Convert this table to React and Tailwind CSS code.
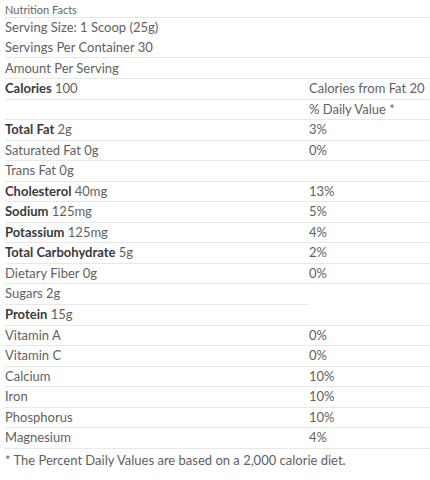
const rows = [
  { label: "Calories", value: "100", bold: true, right: "Calories from Fat 20" },
  { label: "", value: "", right: "% Daily Value *" },
  { label: "Total Fat", value: "2g", bold: true, right: "3%" },
  { label: "Saturated Fat", value: "0g", right: "0%" },
  { label: "Trans Fat", value: "0g", right: "" },
  { label: "Cholesterol", value: "40mg", bold: true, right: "13%" },
  { label: "Sodium", value: "125mg", bold: true, right: "5%" },
  { label: "Potassium", value: "125mg", bold: true, right: "4%" },
  { label: "Total Carbohydrate", value: "5g", bold: true, right: "2%" },
  { label: "Dietary Fiber", value: "0g", right: "0%" },
  { label: "Sugars", value: "2g", right: null },
  { label: "Protein", value: "15g", bold: true, right: "" },
  { label: "Vitamin A", value: "", right: "0%" },
  { label: "Vitamin C", value: "", right: "0%" },
  { label: "Calcium", value: "", right: "10%" },
  { label: "Iron", value: "", right: "10%" },
  { label: "Phosphorus", value: "", right: "10%" },
  { label: "Magnesium", value: "", right: "4%" },
];

const cell = "h-[20.56px] leading-[19px] border-b border-[#e8e8e8] whitespace-nowrap";

export default function App() {
  return (
    <div className="bg-white min-h-screen pl-[5px] text-[13px] text-[#5f5f5f]" style={{ fontFamily: "Lato, 'Liberation Sans', sans-serif" }}>
      <div className="text-[11px] leading-[14px] pt-[3px] border-b border-[#e8e8e8] text-[#666]">Nutrition Facts</div>
      <div className="h-[20px] leading-[19px]">Serving Size: 1 Scoop (25g)</div>
      <div className="h-[20px] leading-[19px] border-b border-[#e8e8e8]">Servings Per Container 30</div>
      <div className="h-[21px] leading-[20px] border-b border-[#e8e8e8]">Amount Per Serving</div>

      <div className="grid grid-cols-[304px_1fr]">
        {rows.map((r, i) => (
          <div key={i} className="contents">
            <div className={cell}>
              {r.bold ? <span className="font-bold text-[#3a3a3a]">{r.label}</span> : r.label}
              {r.value && " " + r.value}
            </div>
            {r.right === null ? <div /> : <div className={cell}>{r.right}</div>}
          </div>
        ))}
      </div>

      <div className="h-[20px] leading-[22px]">* The Percent Daily Values are based on a 2,000 calorie diet.</div>
    </div>
  );
}
